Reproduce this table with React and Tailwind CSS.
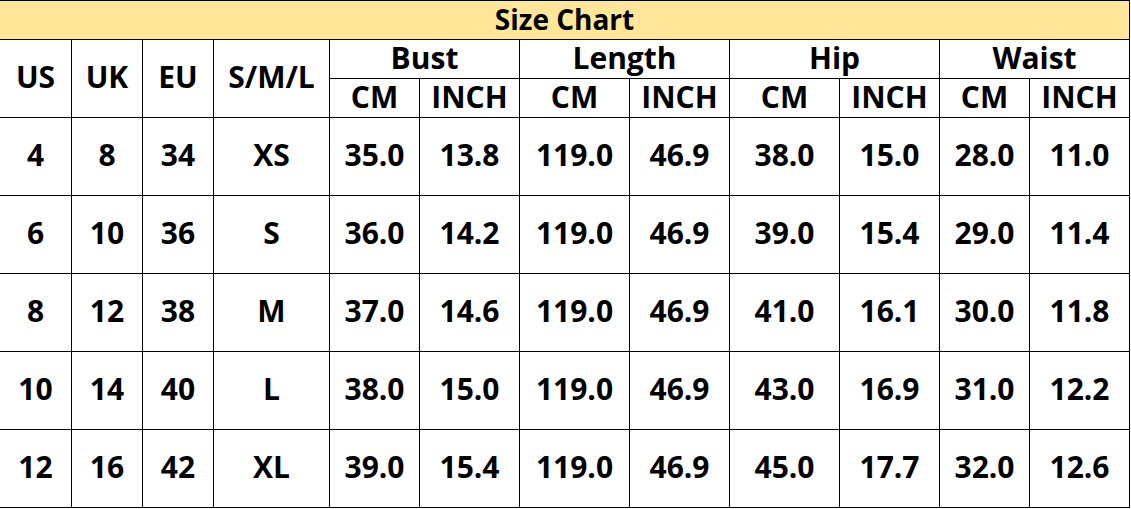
import React from 'react';

const rows = [
  ['4', '8', '34', 'XS', '35.0', '13.8', '119.0', '46.9', '38.0', '15.0', '28.0', '11.0'],
  ['6', '10', '36', 'S', '36.0', '14.2', '119.0', '46.9', '39.0', '15.4', '29.0', '11.4'],
  ['8', '12', '38', 'M', '37.0', '14.6', '119.0', '46.9', '41.0', '16.1', '30.0', '11.8'],
  ['10', '14', '40', 'L', '38.0', '15.0', '119.0', '46.9', '43.0', '16.9', '31.0', '12.2'],
  ['12', '16', '42', 'XL', '39.0', '15.4', '119.0', '46.9', '45.0', '17.7', '32.0', '12.6'],
];

const groups = ['Bust', 'Length', 'Hip', 'Waist'];

function Cell({ children, className = 'bg-white' }) {
  return <div className={`flex items-center justify-center pb-[3px] ${className}`}>{children}</div>;
}

export default function App() {
  return (
    <div className="min-h-screen bg-white font-['Open_Sans','Noto_Sans',sans-serif] font-bold text-black">
      <div className="grid w-fit gap-px bg-black pt-px pr-px pb-px grid-cols-[71px_70px_70px_115px_89px_99px_109px_99px_109px_99px_89px_99px] grid-rows-[38px_38px_38px_repeat(5,77px)] text-[30px] leading-none">
        <Cell className="col-span-12 bg-[#ffe699] text-[28px]">Size Chart</Cell>

        <Cell className="row-span-2 bg-white">US</Cell>
        <Cell className="row-span-2 bg-white">UK</Cell>
        <Cell className="row-span-2 bg-white">EU</Cell>
        <Cell className="row-span-2 bg-white">S/M/L</Cell>
        {groups.map(g => (
          <Cell key={g} className="col-span-2 bg-white">{g}</Cell>
        ))}
        {groups.map(g => (
          <React.Fragment key={g}>
            <Cell>CM</Cell>
            <Cell>INCH</Cell>
          </React.Fragment>
        ))}

        {rows.map((row, i) =>
          row.map((v, j) => <Cell key={`${i}-${j}`}>{v}</Cell>)
        )}
      </div>
    </div>
  );
}
